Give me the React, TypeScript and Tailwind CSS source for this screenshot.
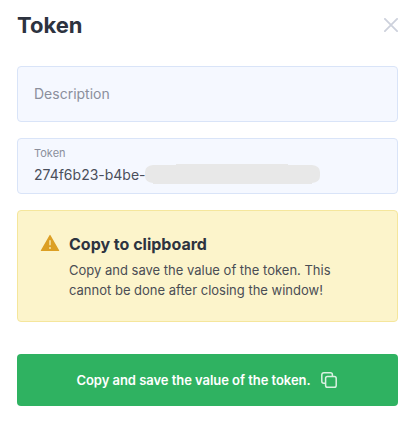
import React from "react";

function CloseIcon() {
  return (
    <svg width="14" height="14" viewBox="0 0 14 14" fill="none" stroke="#cdd1dc" strokeWidth="1.8" strokeLinecap="round">
      <path d="M0.9 0.9 13.1 13.1M13.1 0.9 0.9 13.1" />
    </svg>
  );
}

function WarningIcon() {
  return (
    <svg className="shrink-0" width="20" height="18" viewBox="0 0 20 18">
      <path d="M9.5 1.2a.6.6 0 0 1 1 0L19.1 16.2a.6.6 0 0 1-.5.9H1.4a.6.6 0 0 1-.5-.9Z" fill="#dc9f24" />
      <path d="M9.1 6.2h1.8v5H9.1ZM9.1 13.1h1.8v1.8H9.1Z" fill="#f2d993" />
    </svg>
  );
}

function CopyIcon() {
  return (
    <svg width="16" height="16" viewBox="0 0 16 16" fill="none" stroke="#d9f1e2" strokeWidth="1.5">
      <rect x="4.6" y="4.6" width="10.6" height="10.6" rx="1.8" />
      <path d="M4.6 11.2H2.8a2 2 0 0 1-2-2V2.8a2 2 0 0 1 2-2h6.6a2 2 0 0 1 2 2v1.8" />
    </svg>
  );
}

export default function App() {
  return (
    <main className="h-[421px] w-[413px] bg-white pt-2 pr-[15px] pl-[17px] font-['Inter',sans-serif] text-[#2d333f]">
      <header className="flex h-[58px] items-start justify-between">
        <h1 className="text-[22px] leading-[34px] font-bold">Token</h1>
        <button aria-label="Close" className="mt-[10px]">
          <CloseIcon />
        </button>
      </header>

      <div className="flex flex-col gap-4">
        <div className="flex h-14 items-center rounded border border-[#d9e4f8] bg-[#f5f8ff] px-4 text-sm text-[#8b8f9c]">
          Description
        </div>

        <div className="h-14 rounded border border-[#d9e4f8] bg-[#f5f8ff] px-4 pt-[7px]">
          <div className="text-[11px] leading-[14px] text-[#8b8f9c]">Token</div>
          <div className="flex h-[22px] items-center pt-[6px]">
            <span className="pt-0.5 text-sm text-[#4a4f5b]">274f6b23-b4be-</span>
            <svg className="-ml-px shrink-0" width="176" height="20" viewBox="0 0 176 20">
              <path d="M8 1H31V0H143V1H167Q175 2 175 8V12Q175 18 167 19V20H8V19Q0 18 0 12V8Q0 2 8 1Z" fill="#e8e8e8" />
            </svg>
          </div>
        </div>

        <section className="flex h-28 gap-[9px] rounded border border-[#f5e69c] bg-[#fcf4cb] pt-[23px] pl-[22px]">
          <WarningIcon />
          <div>
            <h2 className="text-base leading-5 font-bold">Copy to clipboard</h2>
            <p className="mt-[6px] w-[275px] text-[13px] leading-5 text-[#4a4d54]">
              Copy and save the value of the token. This cannot be done after closing the window!
            </p>
          </div>
        </section>
      </div>

      <button className="mt-8 flex h-[52px] w-full items-center justify-center gap-[10px] rounded bg-[#2fb261] pr-0.5 text-[13px] font-semibold tracking-[-0.045px] text-white">
        <span className="pt-0.5">Copy and save the value of the token.</span>
        <CopyIcon />
      </button>
    </main>
  );
}
